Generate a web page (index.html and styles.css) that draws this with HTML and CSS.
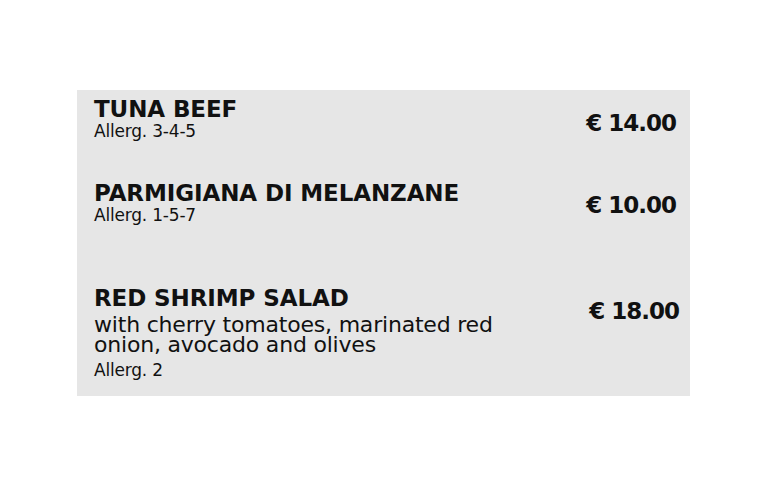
FILE: index.html
```html
<!DOCTYPE html>
<html>
<head>
<meta charset="utf-8">
<link rel="stylesheet" href="styles.css">
</head>
<body>
<div class="menu">
  <div class="item item-1">
    <div class="info">
      <div class="name">TUNA BEEF</div>
      <div class="allerg">Allerg. 3-4-5</div>
    </div>
    <div class="price">€ 14.00</div>
  </div>
  <div class="item item-2">
    <div class="info">
      <div class="name">PARMIGIANA DI MELANZANE</div>
      <div class="allerg">Allerg. 1-5-7</div>
    </div>
    <div class="price">€ 10.00</div>
  </div>
  <div class="item item-3">
    <div class="info">
      <div class="name">RED SHRIMP SALAD</div>
      <div class="desc">with cherry tomatoes, marinated red onion, avocado and olives</div>
      <div class="allerg">Allerg. 2</div>
    </div>
    <div class="price">€ 18.00</div>
  </div>
</div>
</body>
</html>
```
FILE: styles.css
```css
html, body {
  margin: 0;
  padding: 0;
  background: #ffffff;
}
body {
  font-family: "DejaVu Sans", sans-serif;
  color: #111111;
}
.menu {
  margin: 90px 0 0 77px;
  width: 613px;
  height: 306px;
  box-sizing: border-box;
  background: #e6e6e6;
  padding: 6px 14px 0 17px;
  display: flex;
  flex-direction: column;
}
.item {
  display: flex;
  justify-content: space-between;
  align-items: flex-start;
}
.item-2 { margin-top: 40px; }
.item-3 { margin-top: 61px; }
.name {
  font-weight: bold;
  font-size: 23px;
  line-height: 26px;
  letter-spacing: -0.1px;
}
.allerg {
  font-size: 17px;
  line-height: 18px;
  letter-spacing: -0.2px;
}
.desc {
  font-size: 22px;
  line-height: 20px;
  width: 420px;
  margin: 4px 0 6px;
  letter-spacing: -0.2px;
}
.price {
  font-weight: bold;
  font-size: 23px;
  line-height: 26px;
  padding-top: 12px;
  letter-spacing: -1px;
}
.item-1 .price { padding-top: 14px; }
.item-3 .price { padding-top: 13px; margin-right: -3px; }
```
